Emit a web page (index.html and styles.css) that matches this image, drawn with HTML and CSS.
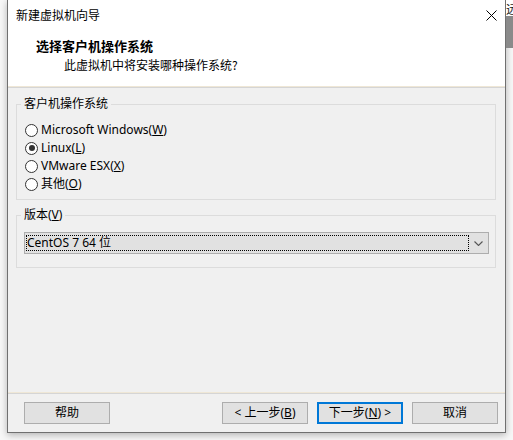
FILE: index.html
```html
<!DOCTYPE html>
<html lang="zh-CN">
<head>
<meta charset="utf-8">
<title>新建虚拟机向导</title>
<link rel="stylesheet" href="styles.css">
</head>
<body>
<div class="desktop">
  <div class="gutter"></div>
  <div class="window">
    <div class="titlebar">
      <span class="title">新建虚拟机向导</span>
      <svg class="close" width="11" height="11" viewBox="0 0 11 11"><path d="M0.5 0.5 L10.5 10.5 M10.5 0.5 L0.5 10.5" stroke="#000" stroke-width="1" fill="none"/></svg>
    </div>
    <div class="header">
      <div class="h-title">选择客户机操作系统</div>
      <div class="h-sub">此虚拟机中将安装哪种操作系统?</div>
    </div>
    <div class="main">
      <fieldset class="group g-os">
        <legend>客户机操作系统</legend>
        <div class="radio"><span class="circle"></span><span>Microsoft Windows(<u>W</u>)</span></div>
        <div class="radio"><span class="circle checked"></span><span>Linux(<u>L</u>)</span></div>
        <div class="radio"><span class="circle"></span><span>VMware ESX(<u>X</u>)</span></div>
        <div class="radio"><span class="circle"></span><span>其他(<u>O</u>)</span></div>
      </fieldset>
      <fieldset class="group g-ver">
        <legend>版本(<u>V</u>)</legend>
        <div class="select">
          <span class="focus">CentOS 7 64 位</span>
          <span class="arrow"><svg width="9" height="5" viewBox="0 0 9 5"><path d="M0.5 0.5 L4.5 4.5 L8.5 0.5" stroke="#555" stroke-width="1.1" fill="none"/></svg></span>
        </div>
      </fieldset>
    </div>
    <div class="footer">
      <button class="btn help">帮助</button>
      <button class="btn back">&lt; 上一步(<u>B</u>)</button>
      <button class="btn next">下一步(<u>N</u>) &gt;</button>
      <button class="btn">取消</button>
    </div>
  </div>
  <div class="edge">
    <div class="edge-top">远</div>
    <div class="edge-gray"></div>
  </div>
</div>
</body>
</html>
```
FILE: styles.css
```css
html, body {
  margin: 0;
  padding: 0;
  background: #f7f7f7;
  overflow: hidden;
}
.desktop {
  display: flex;
  width: 513px;
  height: 440px;
  font-family: "Noto Sans", "Noto Sans CJK SC", sans-serif;
  font-size: 12px;
  color: #000;
}
.gutter {
  width: 7px;
  flex: none;
}
.window {
  width: 499px;
  height: 433px;
  flex: none;
  box-sizing: border-box;
  border: 1px solid #707070;
  border-top: none;
  background: #f0f0f0;
  display: flex;
  flex-direction: column;
  box-shadow: 0 2px 7px rgba(0, 0, 0, 0.28);
}
.titlebar {
  height: 30px;
  background: #fff;
  display: flex;
  align-items: center;
  padding-left: 8px;
}
.title {
  line-height: 16px;
  font-family: "Noto Sans CJK SC", sans-serif;
}
.close {
  margin-left: auto;
  margin-right: 8px;
}
.header {
  height: 57px;
  box-sizing: border-box;
  background: #fff;
  padding: 7px 0 0 28px;
  border-bottom: 1px solid #efe7d6;
  font-family: "Noto Sans CJK SC", sans-serif;
}
.h-title {
  font-weight: bold;
  font-size: 13px;
  line-height: 18px;
}
.h-sub {
  line-height: 18px;
  margin-top: 1px;
  padding-left: 28px;
}
.main {
  flex: 1;
  border-top: 1px solid #d5d5d5;
  padding: 8px 9px 0 8px;
}
.group {
  margin: 0;
  min-width: 0;
  border: 1px solid #dcdcdc;
}
.group legend {
  line-height: 16px;
  padding: 0 3px;
  margin-left: -4px;
}
.g-os {
  padding: 9px 8px 6px 8px;
}
.radio {
  display: flex;
  align-items: center;
  height: 18px;
  line-height: 18px;
}
.circle {
  width: 13px;
  height: 13px;
  box-sizing: border-box;
  border: 1px solid #333;
  border-radius: 50%;
  background: #fff;
  margin-right: 3px;
  display: flex;
  align-items: center;
  justify-content: center;
  flex: none;
}
.circle.checked::after {
  content: "";
  width: 6px;
  height: 6px;
  border-radius: 50%;
  background: #333;
}
.g-ver {
  margin-top: 7px;
  padding: 9px 6px 13px 7px;
}
.g-ver legend {
  margin-left: -3px;
}
.select {
  height: 22px;
  box-sizing: border-box;
  border: 1px solid #adadad;
  background: #e1e1e1;
  display: flex;
  align-items: center;
}
.focus {
  flex: 1;
  height: 16px;
  box-sizing: border-box;
  margin-left: 1px;
  border: 1px dotted #000;
  line-height: 14px;
  padding-left: 0;
}
.arrow {
  width: 19px;
  display: flex;
  justify-content: center;
  align-items: center;
}
.footer {
  border-top: 1px solid #d5d5d5;
  box-shadow: 0 -1px 0 #efe7d6;
  padding: 8px 7px 8px 8px;
  display: flex;
}
.btn {
  width: 86px;
  height: 22px;
  box-sizing: border-box;
  border: 1px solid #adadad;
  background: #e1e1e1;
  font-family: "Noto Sans", "Noto Sans CJK SC", sans-serif;
  font-size: 12px;
  color: #000;
  padding: 0;
  margin: 0;
  line-height: 18px;
}
.help {
  margin-left: 8px;
}
.back {
  margin-left: auto;
}
.next {
  margin-left: 9px;
  margin-right: 9px;
  border: 2px solid #0078d7;
}
.edge {
  width: 7px;
  flex: none;
  overflow: hidden;
  display: flex;
  flex-direction: column;
}
.edge-top {
  height: 16px;
  background: #fff;
  line-height: 18px;
  font-family: "Noto Sans CJK SC", sans-serif;
  font-size: 12px;
  color: #1a1a1a;
  white-space: nowrap;
  overflow: hidden;
}
.edge-gray {
  height: 32px;
  background: #8a8a8a;
}
```
